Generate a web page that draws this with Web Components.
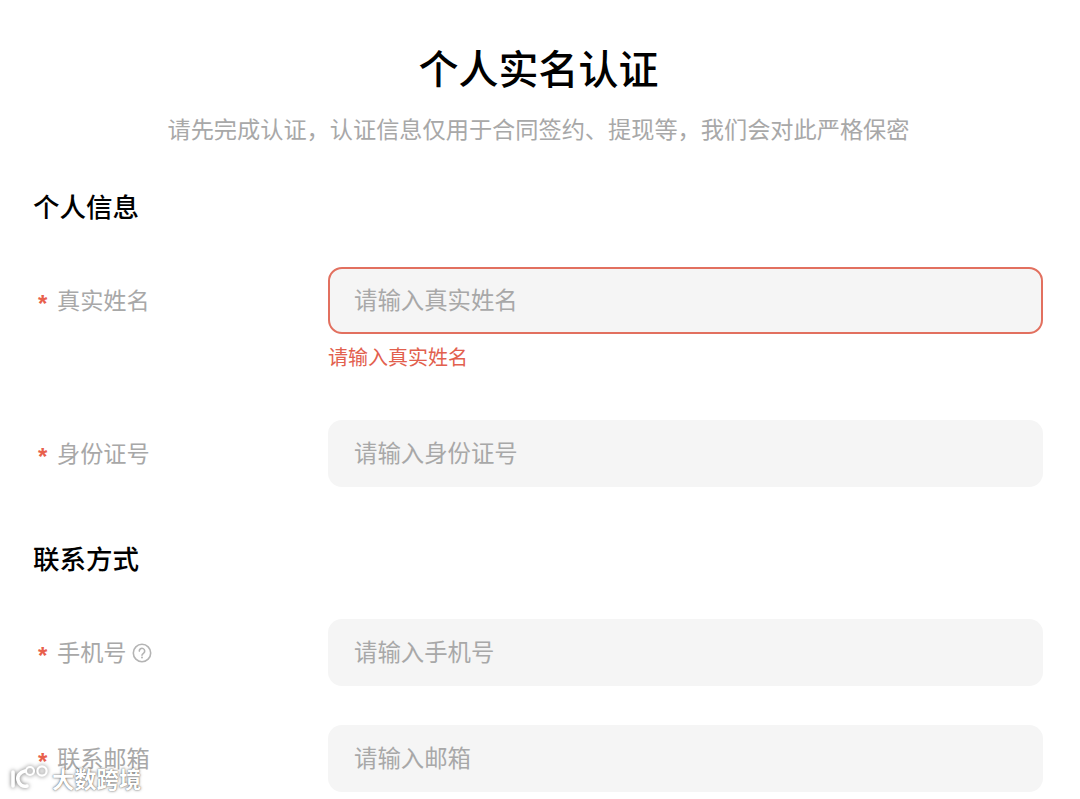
<!DOCTYPE html>
<html lang="zh">
<head>
<meta charset="utf-8">
<title>个人实名认证</title>
<style>
  html, body { margin: 0; background: #fff; }
  body { height: 799px; overflow: hidden; font-family: "Noto Sans CJK SC", "Liberation Sans", sans-serif; }
</style>
</head>
<body>
<auth-page>
  <page-header title="个人实名认证" sub="请先完成认证&#xFF0C;认证信息仅用于合同签约、提现等&#xFF0C;我们会对此严格保密"></page-header>
  <form-section title="个人信息" style="margin-top:42px">
    <form-row label="真实姓名" placeholder="请输入真实姓名" error="请输入真实姓名" style="margin-top:42px"></form-row>
    <form-row label="身份证号" placeholder="请输入身份证号" style="margin-top:49px"></form-row>
  </form-section>
  <form-section title="联系方式" style="margin-top:52px">
    <form-row label="手机号" placeholder="请输入手机号" help style="margin-top:42px"></form-row>
    <form-row label="联系邮箱" placeholder="请输入邮箱" style="margin-top:39px"></form-row>
  </form-section>
  <water-mark></water-mark>
</auth-page>
<script>
customElements.define('auth-page', class extends HTMLElement {
  constructor () {
    super()
    let shadow = this.attachShadow({mode: 'open'})
    shadow.innerHTML = `
<slot></slot>
<style>
  :host {
    display: block;
    position: relative;
    height: 799px;
    padding: 0 37px 0 34px;
    box-sizing: border-box;
    overflow: hidden;
    color: #000;
  }
</style>`
  }
})

customElements.define('page-header', class extends HTMLElement {
  constructor () {
    super()
    let shadow = this.attachShadow({mode: 'open'})
    shadow.innerHTML = `
<h1>${this.getAttribute('title')}</h1>
<p>${this.getAttribute('sub')}</p>
<style>
  :host { display: block; padding-top: 38px; text-align: center; margin-right: -1px; margin-left: -1px; }
  h1 { margin: 0; font-size: 40px; line-height: 58px; font-weight: 500; color: #000; }
  p { margin: 15px 0 0; font-size: 23.2px; line-height: 34px; color: #a8a8a8; white-space: nowrap; }
</style>`
  }
})

customElements.define('form-section', class extends HTMLElement {
  constructor () {
    super()
    let shadow = this.attachShadow({mode: 'open'})
    shadow.innerHTML = `
<h2>${this.getAttribute('title')}</h2>
<slot></slot>
<style>
  :host { display: block; }
  h2 { margin: 0 0 0 -1px; font-size: 26.5px; line-height: 38px; font-weight: 500; color: #000; }
</style>`
  }
})

customElements.define('form-row', class extends HTMLElement {
  constructor () {
    super()
    let shadow = this.attachShadow({mode: 'open'})
    let help = this.hasAttribute('help') ? `
<svg width="20" height="20" viewBox="0 0 20 20" fill="none" stroke="#b4b4b4" stroke-width="1.6">
  <circle cx="10" cy="10" r="8.7"/>
  <path d="M7.3 8.1a2.7 2.7 0 1 1 4.3 2.1c-.9.6-1.6 1-1.6 2" stroke-linecap="round"/>
  <circle cx="10" cy="14.6" r="1" fill="#b4b4b4" stroke="none"/>
</svg>` : ''
    let error = this.getAttribute('error')
    shadow.innerHTML = `
<div class="label"><span class="star">*</span><span class="text">${this.getAttribute('label')}</span>${help}</div>
<div class="field">
  <div class="box ${error ? 'bad' : ''}"><span>${this.getAttribute('placeholder')}</span></div>
  ${error ? `<div class="err">${error}</div>` : ''}
</div>
<style>
  :host { display: grid; grid-template-columns: 294px 715px; align-items: start; }
  .label { display: flex; align-items: center; height: 67px; padding-left: 4px; font-size: 23.2px; color: #a8a8a8; }
  .text { padding-bottom: 3px; }
  .star { width: 19px; color: #e8604c; font-family: "Liberation Sans", sans-serif; font-weight: 700; font-size: 24px; line-height: 24px; padding-top: 6px; }
  svg { margin-left: 5px; }
  .box {
    box-sizing: border-box;
    height: 67px;
    padding: 0 26px 3px;
    display: flex;
    align-items: center;
    background: #f5f5f5;
    border-radius: 14px;
    font-size: 23.4px;
    color: #a8a8a8;
  }
  .box.bad { border: 2px solid #e2705f; padding: 0 24px 3px; }
  .err { margin-top: 8px; font-size: 20px; line-height: 29px; color: #e2604e; }
</style>`
  }
})

customElements.define('water-mark', class extends HTMLElement {
  constructor () {
    super()
    let shadow = this.attachShadow({mode: 'open'})
    shadow.innerHTML = `
<svg width="42" height="30" viewBox="0 0 42 30" fill="none" stroke="#fff" stroke-width="3.6" stroke-linecap="round">
  <path d="M5 9v14M17 8c-5 1-8 5-7 9 1 5 5 7 9 6"/>
  <circle cx="22" cy="8" r="4" stroke-width="2.2"/>
  <circle cx="34" cy="8" r="4.6" stroke-width="2.2"/>
</svg>
<span>大数跨境</span>
<style>
  :host {
    position: absolute;
    left: 8px;
    top: 762px;
    display: flex;
    align-items: center;
    gap: 2px;
  }
  svg { filter: drop-shadow(0 0 2px rgba(0,0,0,.55)); }
  span {
    font-size: 22.3px;
    line-height: 32px;
    font-weight: 700;
    color: #fff;
    text-shadow: 0 0 3px rgba(0,0,0,.55), 0 0 1px rgba(0,0,0,.45);
  }
</style>`
  }
})
</script>
</body>
</html>
